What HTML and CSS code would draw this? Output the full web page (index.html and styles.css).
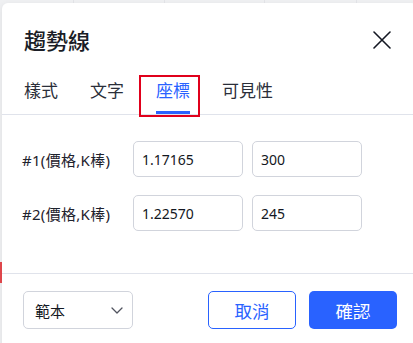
FILE: index.html
```html
<!DOCTYPE html>
<html lang="zh-Hant">
<head>
<meta charset="utf-8">
<title>趨勢線</title>
<link rel="stylesheet" href="styles.css">
</head>
<body>
<div class="chart-mark"></div>
<div class="dialog">
  <div class="header">
    <div class="title">趨勢線</div>
    <svg class="close" width="18" height="18" viewBox="0 0 18 18"><path d="M1 1 L17 17 M17 1 L1 17" stroke="#131722" stroke-width="1.6" fill="none" stroke-linecap="round"/></svg>
  </div>
  <div class="tabs">
    <div class="tab">樣式</div>
    <div class="tab">文字</div>
    <div class="tab active">座標</div>
    <div class="tab">可見性</div>
  </div>
  <div class="content">
    <div class="label">#1(價格,K棒)</div>
    <div class="input">1.17165</div>
    <div class="input">300</div>
    <div class="label">#2(價格,K棒)</div>
    <div class="input">1.22570</div>
    <div class="input">245</div>
  </div>
  <div class="footer">
    <div class="select">
      <span>範本</span>
      <svg width="12" height="7" viewBox="0 0 12 7"><path d="M1 1 L6 6 L11 1" stroke="#50535e" stroke-width="1.3" fill="none" stroke-linecap="round" stroke-linejoin="round"/></svg>
    </div>
    <div class="spacer"></div>
    <div class="btn btn-outline">取消</div>
    <div class="btn btn-primary">確認</div>
  </div>
  <div class="highlight"></div>
</div>
</body>
</html>
```
FILE: styles.css
```css
html, body {
  margin: 0;
  padding: 0;
  overflow: hidden;
  height: 100%;
}
body {
  background:
    linear-gradient(#e3e4e8, #e3e4e8) 73px 0 / 1px 100% no-repeat,
    linear-gradient(#e3e4e8, #e3e4e8) 164px 0 / 1px 100% no-repeat,
    linear-gradient(#e3e4e8, #e3e4e8) 264px 0 / 1px 100% no-repeat,
    linear-gradient(#e3e4e8, #e3e4e8) 356px 0 / 1px 100% no-repeat,
    #eff0f2;
  font-family: "Noto Sans", "Noto Sans CJK TC", sans-serif;
  color: #131722;
  position: relative;
}
.chart-mark {
  position: absolute;
  left: 0;
  top: 262px;
  width: 2px;
  height: 21px;
  background: #e5484d;
}
.dialog {
  position: relative;
  margin: 3px 0 0 2px;
  width: 415px;
  background: #fff;
  border-radius: 6px;
  box-shadow: 0 2px 6px rgba(0,0,0,0.08);
}
.header {
  display: flex;
  align-items: center;
  justify-content: space-between;
  padding: 23px 26px 0 22px;
  height: 28px;
  box-sizing: content-box;
}
.title {
  font-size: 22px;
  font-weight: 500;
  line-height: 28px;
  color: #1a1d26;
}
.close {
  display: block;
}
.tabs {
  display: flex;
  gap: 32px;
  padding: 0 22px;
  border-bottom: 1px solid #e0e3eb;
}
.tab {
  font-size: 17px;
  line-height: 24px;
  padding-top: 25px;
  padding-bottom: 8px;
  border-bottom: 3px solid transparent;
  color: #2a2e39;
}
.tab.active {
  color: #2962ff;
  border-bottom-color: #2962ff;
}
.content {
  display: grid;
  grid-template-columns: 102px 110px 110px;
  column-gap: 9px;
  row-gap: 18px;
  align-items: center;
  padding: 26px 20px 42px 20px;
  border-bottom: 1px solid #e0e3eb;
}
.label {
  font-size: 15px;
  letter-spacing: 0.3px;
  color: #1e222d;
}
.input {
  height: 36px;
  box-sizing: border-box;
  border: 1px solid #d1d4dc;
  border-radius: 5px;
  padding: 0 8px;
  display: flex;
  align-items: center;
  font-size: 14px;
}
.footer {
  display: flex;
  align-items: center;
  gap: 13px;
  padding: 17px 20px 20px 21px;
}
.spacer {
  flex: 1;
}
.select {
  width: 110px;
  height: 38px;
  box-sizing: border-box;
  border: 1px solid #d1d4dc;
  border-radius: 5px;
  display: flex;
  align-items: center;
  justify-content: space-between;
  padding: 0 9px 0 11px;
  font-size: 15px;
}
.btn {
  width: 88px;
  height: 38px;
  box-sizing: border-box;
  border-radius: 5px;
  display: flex;
  align-items: center;
  justify-content: center;
  font-size: 17.5px;
}
.btn-outline {
  border: 1px solid #2962ff;
  color: #2962ff;
}
.btn-primary {
  background: #2962ff;
  color: #fff;
}
.highlight {
  position: absolute;
  left: 137px;
  top: 72px;
  width: 61px;
  height: 42px;
  box-sizing: border-box;
  border: 2.5px solid #e0001b;
}
```
